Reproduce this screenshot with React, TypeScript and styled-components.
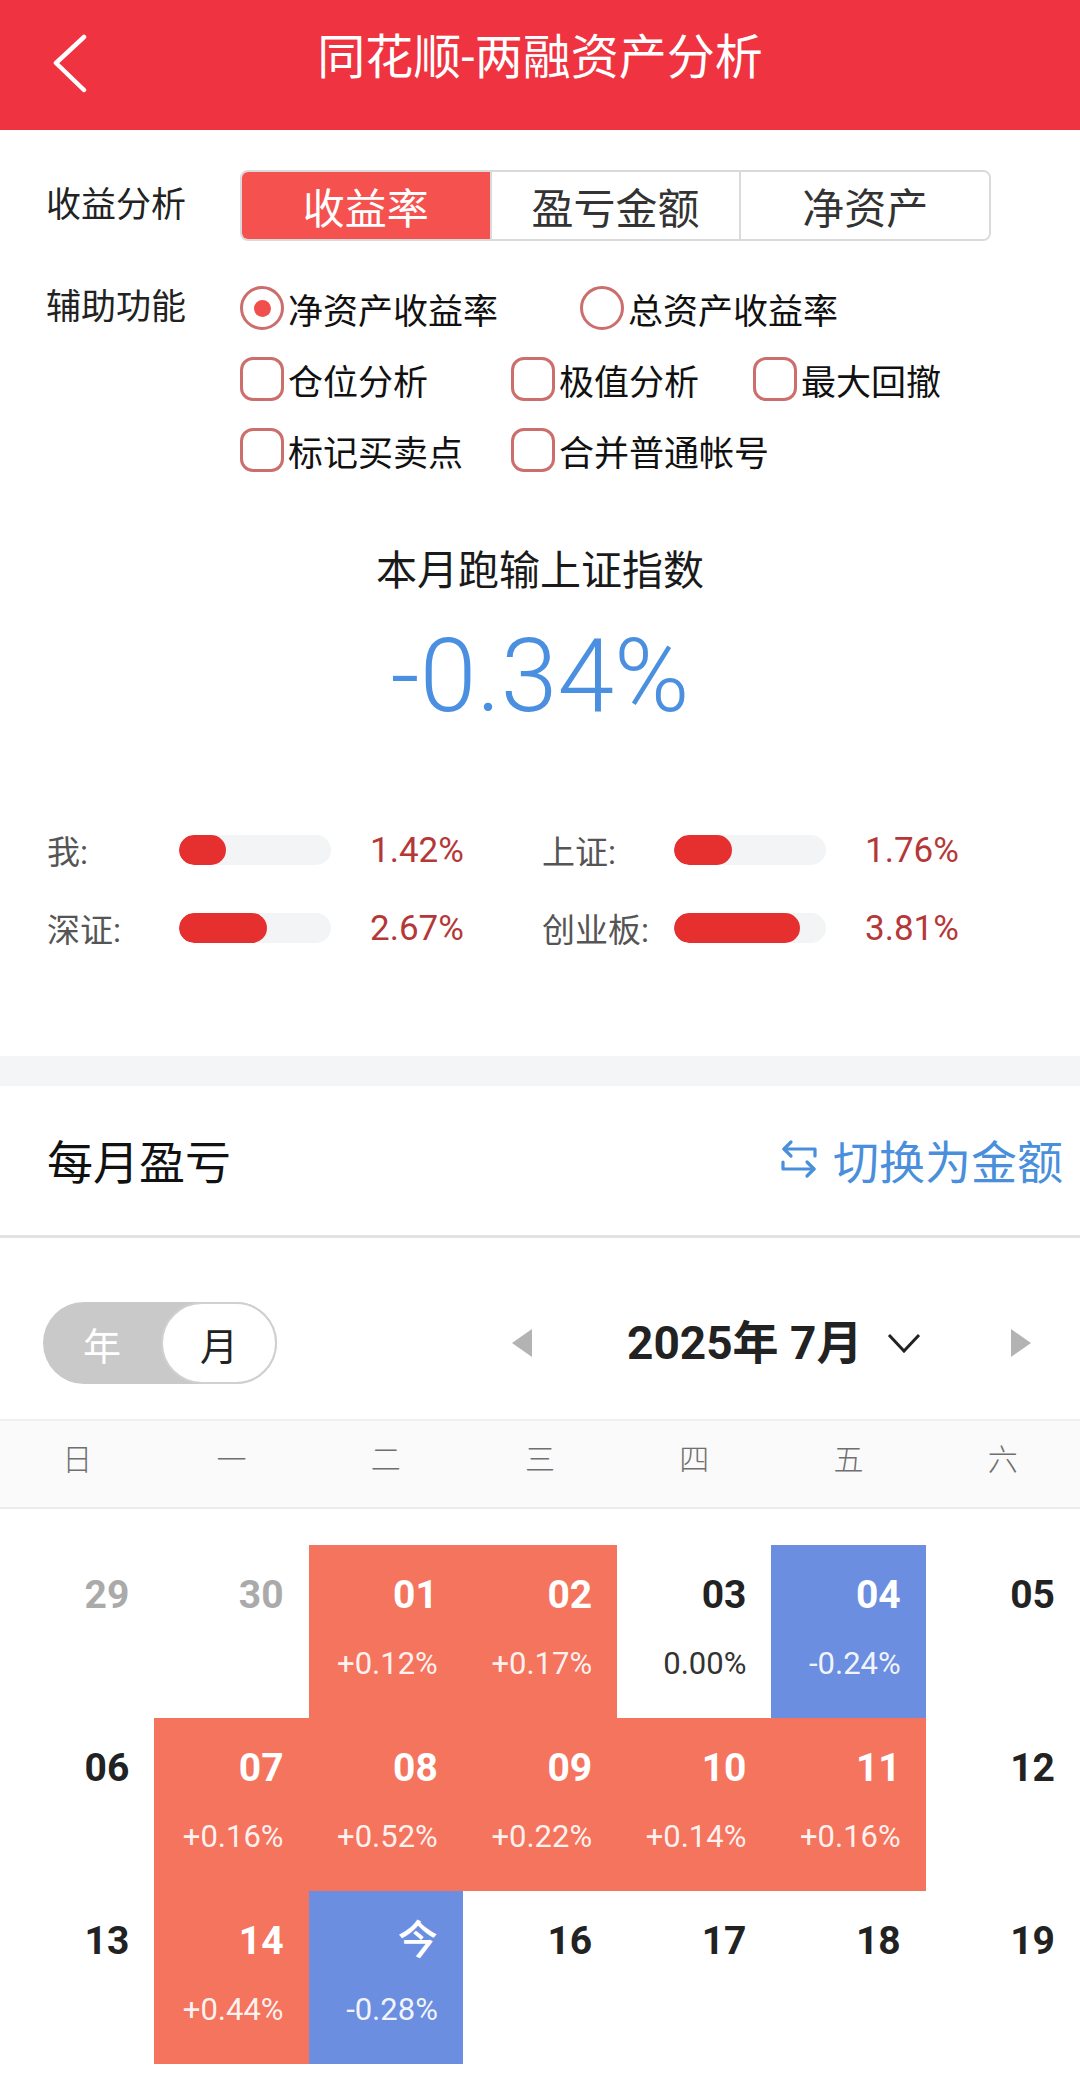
import React from "react";
import styled, { createGlobalStyle } from "styled-components";

const GlobalStyle = createGlobalStyle`
  html, body {
    margin: 0;
    padding: 0;
    background: #fff;
  }
  body {
    font-family: "Roboto", "Noto Sans CJK SC", sans-serif;
    color: #222;
  }
  * {
    box-sizing: border-box;
  }
`;

const Page = styled.div`
  width: 1080px;
  height: 2081px;
  overflow: hidden;
  background: #fff;
`;

/* ---------- header ---------- */
const Header = styled.header`
  height: 130px;
  background: #ef3340;
  display: grid;
  grid-template-columns: 130px 1fr 130px;
  align-items: center;
  padding-bottom: 14px;
`;

const BackButton = styled.div`
  padding-left: 52px;
  padding-top: 12px;
  display: flex;
`;

const HeaderTitle = styled.h1`
  margin: 0;
  text-align: center;
  color: #fff;
  font-size: 48px;
  font-weight: 400;
  line-height: 56px;
`;

/* ---------- options ---------- */
const OptionsPanel = styled.section`
  padding: 40px 0 0 46px;
`;

const OptionRow = styled.div<{ gap?: number }>`
  display: flex;
  align-items: flex-start;
  margin-top: ${({ gap }) => gap || 0}px;
`;

const RowLabel = styled.div<{ lineHeight: number }>`
  width: 194px;
  font-size: 35px;
  line-height: ${({ lineHeight }) => lineHeight}px;
  color: #222;
`;

const Segmented = styled.div`
  display: flex;
  width: 751px;
  height: 71px;
  border: 2px solid #dadada;
  border-radius: 8px;
  overflow: hidden;
`;

const Segment = styled.div<{ active?: boolean }>`
  flex: 1;
  display: flex;
  align-items: center;
  justify-content: center;
  font-size: 42px;
  color: ${({ active }) => (active ? "#fff" : "#333")};
  background: ${({ active }) => (active ? "#f5524f" : "#fff")};
  & + & {
    border-left: 2px solid #dadada;
  }
`;

const CheckGroup = styled.div`
  display: flex;
  flex-direction: column;
  gap: 27px;
`;

const CheckLine = styled.div`
  display: flex;
  height: 44px;
`;

const CheckItem = styled.label<{ width: number }>`
  width: ${({ width }) => width}px;
  display: flex;
  align-items: center;
  gap: 4px;
  font-size: 35px;
  color: #111;
`;

const Mark = styled.span<{ round?: boolean }>`
  width: 44px;
  height: 44px;
  flex: none;
  border: 3.5px solid #cc6e6c;
  border-radius: ${({ round }) => (round ? "50%" : "13px")};
  display: flex;
  align-items: center;
  justify-content: center;
`;

const Dot = styled.span`
  width: 17px;
  height: 17px;
  border-radius: 50%;
  background: #f04f4c;
`;

/* ---------- summary ---------- */
const Summary = styled.section`
  margin-top: 75px;
  text-align: center;
`;

const SummaryTitle = styled.div`
  font-size: 41px;
  line-height: 48px;
  color: #1a1a1a;
`;

const SummaryValue = styled.div`
  margin-top: 32px;
  font-size: 102px;
  line-height: 98px;
  font-weight: 300;
  color: #4a8fe0;
`;

const CompareGrid = styled.div`
  margin-top: 100px;
  padding-left: 47px;
  display: grid;
  grid-template-columns: 495px 495px;
  row-gap: 28px;
`;

const CompareItem = styled.div`
  display: flex;
  align-items: center;
  height: 50px;
`;

const CompareLabel = styled.div`
  width: 132px;
  font-size: 33px;
  color: #555;
`;

const Track = styled.div`
  width: 152px;
  height: 30px;
  border-radius: 15px;
  background: #f3f4f5;
  overflow: hidden;
`;

const Fill = styled.div`
  height: 100%;
  border-radius: 15px;
  background: #e5302f;
`;

const CompareValue = styled.div`
  margin-left: 39px;
  font-size: 35px;
  color: #b53838;
`;

const Band = styled.div`
  margin-top: 103px;
  height: 30px;
  background: #f4f5f7;
`;

/* ---------- monthly ---------- */
const SectionHead = styled.div`
  height: 152px;
  border-bottom: 3px solid #e3e3e3;
  display: flex;
  align-items: center;
  justify-content: space-between;
  padding: 0 17px 4px 47px;
`;

const SectionTitle = styled.h2`
  margin: 0;
  font-size: 46px;
  font-weight: 400;
  color: #111;
`;

const SwitchLink = styled.div`
  display: flex;
  align-items: center;
  gap: 14px;
  font-size: 46px;
  color: #4a8fdc;
`;

const CalendarBar = styled.div`
  display: flex;
  align-items: center;
  padding: 64px 0 35px 43px;
`;

const Toggle = styled.div`
  display: flex;
  width: 234px;
  height: 82px;
  border-radius: 41px;
  background: #c9c9c9;
`;

const ToggleOption = styled.div<{ active?: boolean }>`
  width: ${({ active }) => (active ? 116 : 118)}px;
  height: 82px;
  display: flex;
  align-items: center;
  justify-content: center;
  font-size: 38px;
  border-radius: 41px;
  color: ${({ active }) => (active ? "#222" : "#fff")};
  background: ${({ active }) => (active ? "#fff" : "transparent")};
  border: ${({ active }) => (active ? "2px solid #d0d0d0" : "none")};
`;

const MonthNav = styled.div`
  display: flex;
  align-items: center;
  margin-left: 235px;
`;

const MonthLabel = styled.div`
  width: 260px;
  margin-left: 95px;
  font-size: 46px;
  font-weight: 700;
  line-height: 1;
  color: #222;
`;

const NavSlot = styled.div<{ gap?: number }>`
  display: flex;
  margin-left: ${({ gap }) => gap || 0}px;
`;

const WeekRow = styled.div`
  display: grid;
  grid-template-columns: repeat(7, 1fr);
  height: 90px;
  align-items: center;
  padding-bottom: 14px;
  background: #fafafa;
  border-top: 2px solid #f0f0f0;
  border-bottom: 2px solid #ececec;
  text-align: center;
  font-size: 30px;
  font-weight: 300;
  color: #6f6f6f;
`;

const DayGrid = styled.div`
  margin-top: 36px;
  display: grid;
  grid-template-columns: repeat(7, 1fr);
  grid-auto-rows: 173px;
`;

type Tone = "up" | "down" | "flat" | "none";

const toneBg: Record<Tone, string> = {
  up: "#f5745e",
  down: "#6b8ee0",
  flat: "transparent",
  none: "transparent",
};

const DayCell = styled.div<{ tone: Tone }>`
  display: flex;
  flex-direction: column;
  align-items: flex-end;
  padding: 31px 25px 0 0;
  background: ${({ tone }) => toneBg[tone]};
`;

const DayNum = styled.div<{ tone: Tone; muted?: boolean; today?: boolean }>`
  font-size: ${({ today }) => (today ? 40 : 39)}px;
  font-weight: ${({ today }) => (today ? 500 : 700)};
  line-height: 38px;
  color: ${({ tone, muted }) =>
    muted ? "#aaa" : tone === "up" || tone === "down" ? "#fff" : "#222"};
`;

const DayPct = styled.div<{ tone: Tone }>`
  margin-top: 35px;
  font-size: 31px;
  line-height: 30px;
  color: ${({ tone }) => (tone === "flat" ? "#333" : "rgba(255,255,255,0.92)")};
`;

/* ---------- data ---------- */
const compare = [
  { label: "我:", pct: 1.42 },
  { label: "上证:", pct: 1.76 },
  { label: "深证:", pct: 2.67 },
  { label: "创业板:", pct: 3.81 },
];

type Day = { n: string; tone: Tone; pct?: string; muted?: boolean; today?: boolean };

const days: Day[] = [
  { n: "29", tone: "none", muted: true },
  { n: "30", tone: "none", muted: true },
  { n: "01", tone: "up", pct: "+0.12%" },
  { n: "02", tone: "up", pct: "+0.17%" },
  { n: "03", tone: "flat", pct: "0.00%" },
  { n: "04", tone: "down", pct: "-0.24%" },
  { n: "05", tone: "none" },
  { n: "06", tone: "none" },
  { n: "07", tone: "up", pct: "+0.16%" },
  { n: "08", tone: "up", pct: "+0.52%" },
  { n: "09", tone: "up", pct: "+0.22%" },
  { n: "10", tone: "up", pct: "+0.14%" },
  { n: "11", tone: "up", pct: "+0.16%" },
  { n: "12", tone: "none" },
  { n: "13", tone: "none" },
  { n: "14", tone: "up", pct: "+0.44%" },
  { n: "今", tone: "down", pct: "-0.28%", today: true },
  { n: "16", tone: "none" },
  { n: "17", tone: "none" },
  { n: "18", tone: "none" },
  { n: "19", tone: "none" },
];

const weekdays = ["日", "一", "二", "三", "四", "五", "六"];

const SwapIcon = () => (
  <svg width="40" height="40" viewBox="0 0 40 40" fill="none" stroke="#4a8fdc" strokeWidth="3.2" strokeLinecap="round" strokeLinejoin="round">
    <path d="M36 17V10H5" />
    <path d="M12 3L5 10L12 17" />
    <path d="M4 23V30H35" />
    <path d="M28 23L35 30L28 37" />
  </svg>
);

const Triangle = ({ dir }: { dir: "left" | "right" }) => (
  <svg width="20" height="28" viewBox="0 0 20 28">
    <path d={dir === "left" ? "M20 0V28L0 14Z" : "M0 0V28L20 14Z"} fill="#b3b3b3" />
  </svg>
);

export default function App() {
  const max = 4.6;
  return (
    <Page>
      <GlobalStyle />
      <Header>
        <BackButton>
          <svg width="36" height="60" viewBox="0 0 36 60" fill="none" stroke="#fff" strokeWidth="4.5" strokeLinecap="round" strokeLinejoin="round">
            <path d="M32 3L4 29L32 56" />
          </svg>
        </BackButton>
        <HeaderTitle>同花顺-两融资产分析</HeaderTitle>
        <div />
      </Header>

      <OptionsPanel>
        <OptionRow>
          <RowLabel lineHeight={71}>收益分析</RowLabel>
          <Segmented>
            <Segment active>收益率</Segment>
            <Segment>盈亏金额</Segment>
            <Segment>净资产</Segment>
          </Segmented>
        </OptionRow>
        <OptionRow gap={45}>
          <RowLabel lineHeight={44}>辅助功能</RowLabel>
          <CheckGroup>
            <CheckLine>
              <CheckItem width={340}>
                <Mark round>
                  <Dot />
                </Mark>
                净资产收益率
              </CheckItem>
              <CheckItem width={300}>
                <Mark round />
                总资产收益率
              </CheckItem>
            </CheckLine>
            <CheckLine>
              <CheckItem width={271}>
                <Mark />
                仓位分析
              </CheckItem>
              <CheckItem width={242}>
                <Mark />
                极值分析
              </CheckItem>
              <CheckItem width={240}>
                <Mark />
                最大回撤
              </CheckItem>
            </CheckLine>
            <CheckLine>
              <CheckItem width={271}>
                <Mark />
                标记买卖点
              </CheckItem>
              <CheckItem width={300}>
                <Mark />
                合并普通帐号
              </CheckItem>
            </CheckLine>
          </CheckGroup>
        </OptionRow>
      </OptionsPanel>

      <Summary>
        <SummaryTitle>本月跑输上证指数</SummaryTitle>
        <SummaryValue>-0.34%</SummaryValue>
      </Summary>

      <CompareGrid>
        {compare.map((c) => (
          <CompareItem key={c.label}>
            <CompareLabel>{c.label}</CompareLabel>
            <Track>
              <Fill style={{ width: `${(c.pct / max) * 100}%` }} />
            </Track>
            <CompareValue>{c.pct.toFixed(2)}%</CompareValue>
          </CompareItem>
        ))}
      </CompareGrid>

      <Band />

      <SectionHead>
        <SectionTitle>每月盈亏</SectionTitle>
        <SwitchLink>
          <SwapIcon />
          切换为金额
        </SwitchLink>
      </SectionHead>

      <CalendarBar>
        <Toggle>
          <ToggleOption>年</ToggleOption>
          <ToggleOption active>月</ToggleOption>
        </Toggle>
        <MonthNav>
          <Triangle dir="left" />
          <MonthLabel>2025年 7月</MonthLabel>
          <NavSlot>
            <svg width="34" height="20" viewBox="0 0 34 20" fill="none" stroke="#222" strokeWidth="3">
              <path d="M2 2L17 18L32 2" />
            </svg>
          </NavSlot>
          <NavSlot gap={90}>
            <Triangle dir="right" />
          </NavSlot>
        </MonthNav>
      </CalendarBar>

      <WeekRow>
        {weekdays.map((w) => (
          <div key={w}>{w}</div>
        ))}
      </WeekRow>

      <DayGrid>
        {days.map((d) => (
          <DayCell key={d.n} tone={d.tone}>
            <DayNum tone={d.tone} muted={d.muted} today={d.today}>
              {d.n}
            </DayNum>
            {d.pct && <DayPct tone={d.tone}>{d.pct}</DayPct>}
          </DayCell>
        ))}
      </DayGrid>
    </Page>
  );
}
